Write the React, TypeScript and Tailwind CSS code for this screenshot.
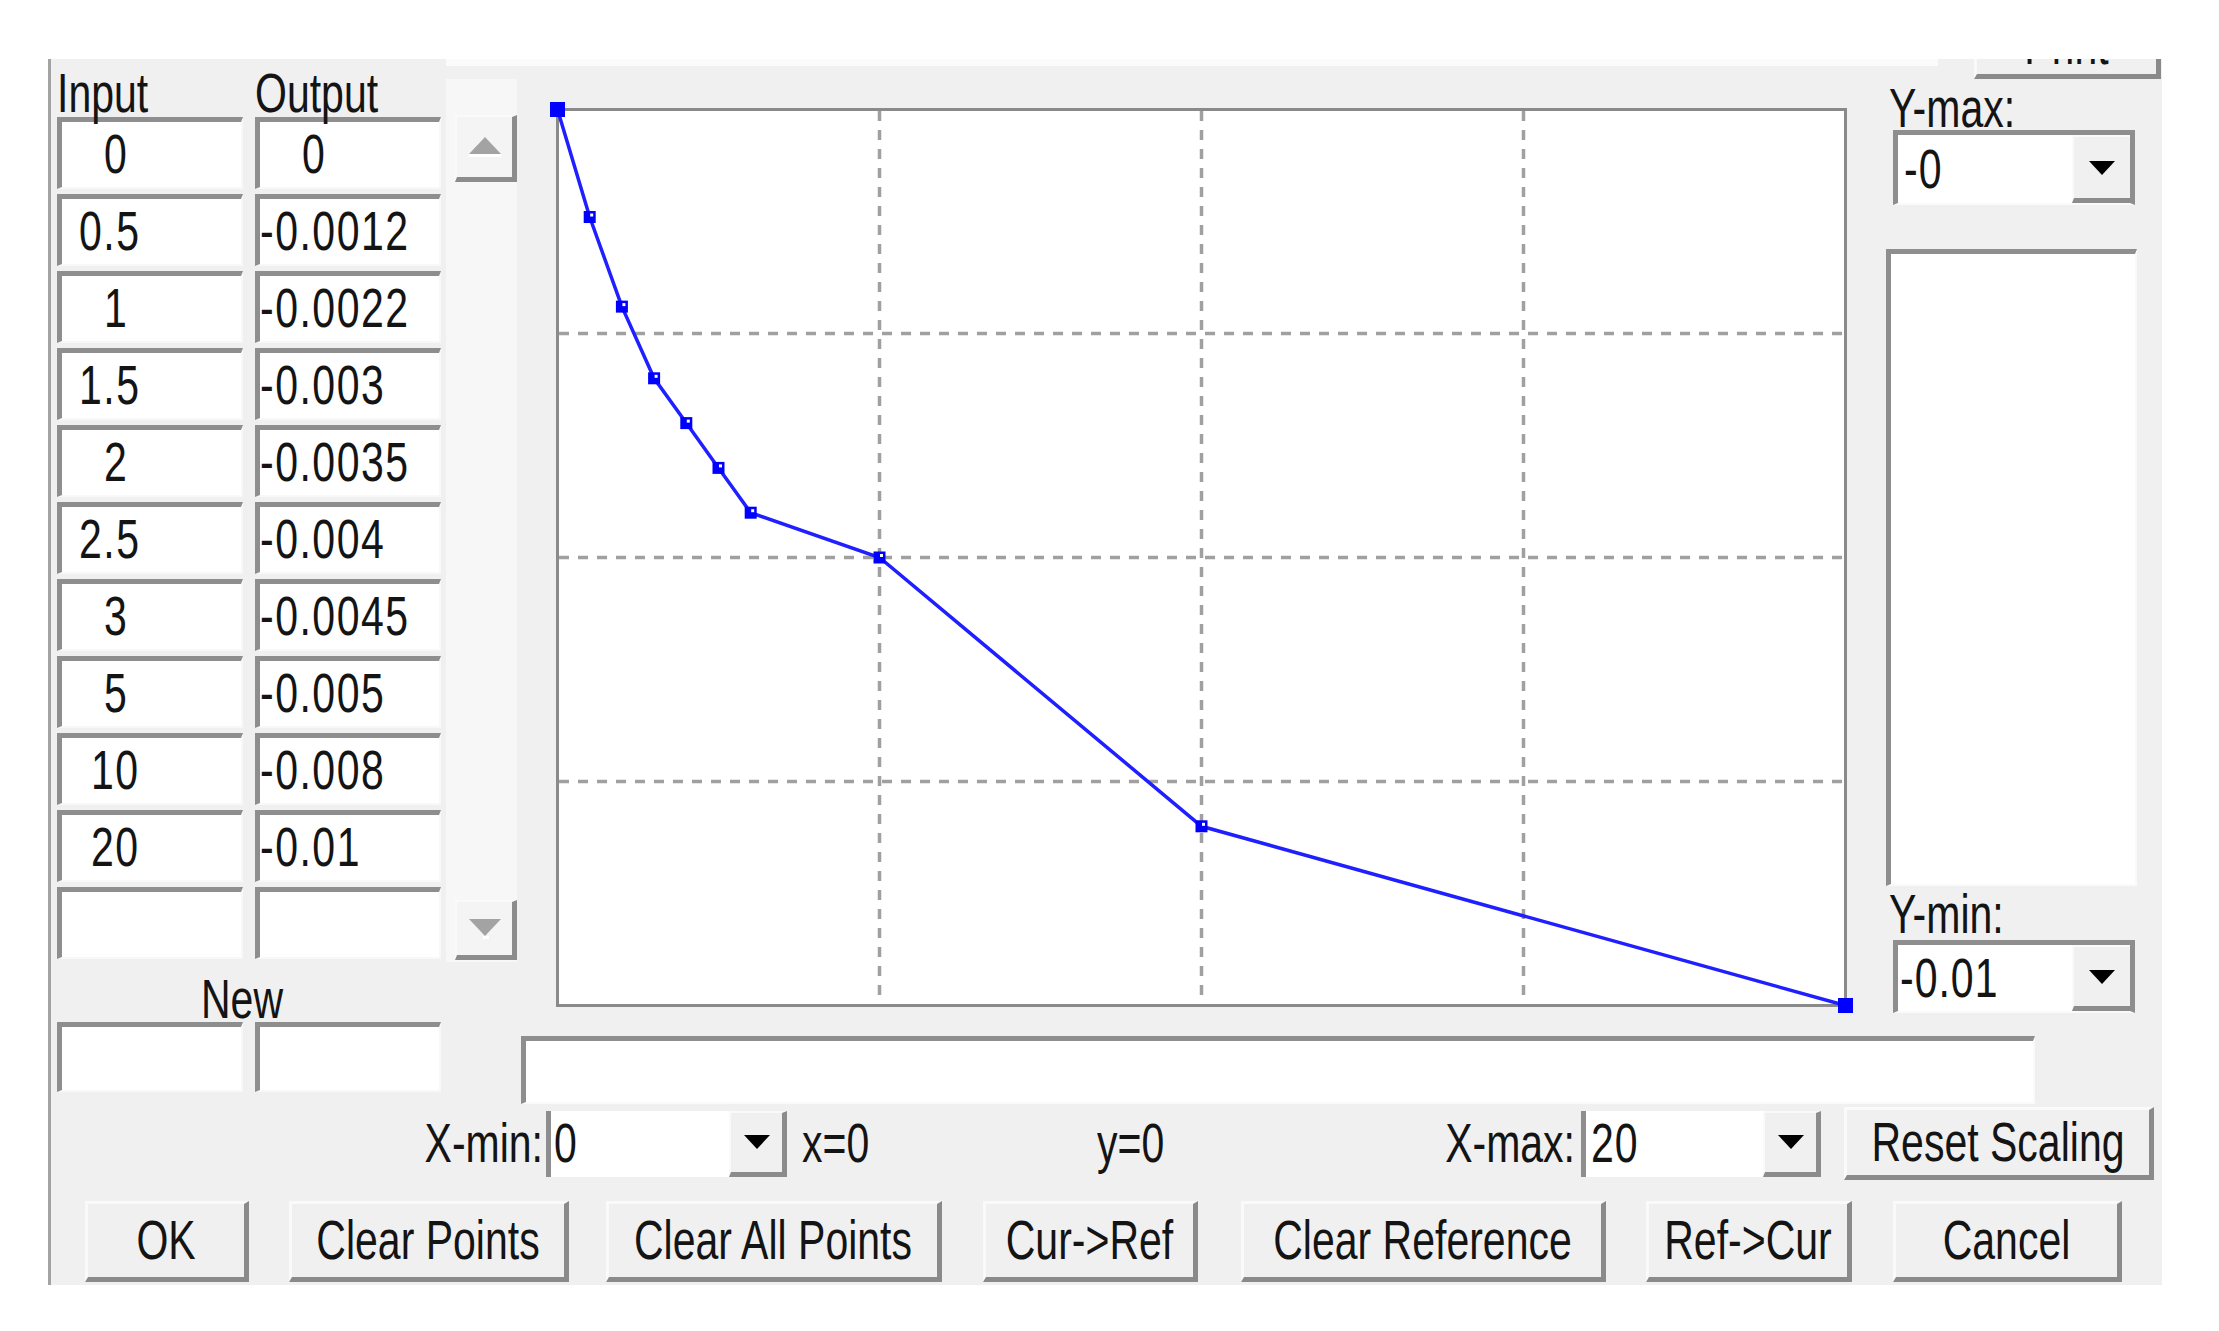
import type { ReactNode } from "react";

// text in the reference is a tall, narrow bitmap face; stretch Arial-metric text vertically
function T({ children, className = "" }: { children: ReactNode; className?: string }) {
  return (
    <span className={`inline-block h-[41px] origin-center scale-y-[1.37] leading-[41px] whitespace-pre ${className}`}>
      {children}
    </span>
  );
}

const rows: [string, string, string, string][] = [
  ["0", "0", "pl-[42px]", "pl-[42px]"],
  ["0.5", "-0.0012", "pl-[17px]", "pl-[0px]"],
  ["1", "-0.0022", "pl-[42px]", "pl-[0px]"],
  ["1.5", "-0.003", "pl-[17px]", "pl-[0px]"],
  ["2", "-0.0035", "pl-[42px]", "pl-[0px]"],
  ["2.5", "-0.004", "pl-[17px]", "pl-[0px]"],
  ["3", "-0.0045", "pl-[42px]", "pl-[0px]"],
  ["5", "-0.005", "pl-[42px]", "pl-[0px]"],
  ["10", "-0.008", "pl-[29px]", "pl-[0px]"],
  ["20", "-0.01", "pl-[29px]", "pl-[0px]"],
  ["", "", "pl-[0px]", "pl-[0px]"],
];

const points: [number, number][] = [
  [0, 0],
  [0.5, -0.0012],
  [1, -0.0022],
  [1.5, -0.003],
  [2, -0.0035],
  [2.5, -0.004],
  [3, -0.0045],
  [5, -0.005],
  [10, -0.008],
  [20, -0.01],
];

function Cell({ text, pad, h = "h-[72px]" }: { text: string; pad: string; h?: string }) {
  return (
    <div
      className={`flex ${h} w-[186px] items-center border-t-[5px] border-l-[5px] border-r-2 border-b-2 border-t-[#8e8e8e] border-l-[#8e8e8e] border-r-[#f8f8f8] border-b-[#f8f8f8] bg-white ${pad}`}
    >
      <T className="tracking-[1.5px]">{text}</T>
    </div>
  );
}

function Btn({ label, className }: { label: string; className: string }) {
  return (
    <div
      className={`flex items-center justify-center border-t-[3px] border-l-[3px] border-r-[5px] border-b-[5px] border-t-[#fafafa] border-l-[#fafafa] border-r-[#8a8a8a] border-b-[#8a8a8a] bg-[#f0f0f0] ${className}`}
    >
      <T>{label}</T>
    </div>
  );
}

function DropArrow() {
  return (
    <svg width="26" height="14" viewBox="0 0 26 14">
      <polygon points="0,0 26,0 13,14" fill="#000" />
    </svg>
  );
}

function Combo({ value, pad, flat, className }: { value: string; pad: string; flat?: boolean; className: string }) {
  const frame = flat
    ? "border-l-[5px] border-l-[#8e8e8e]"
    : "border-t-[5px] border-l-[5px] border-r-[5px] border-b-2 border-t-[#8e8e8e] border-l-[#8e8e8e] border-r-[#8e8e8e] border-b-[#fafafa]";
  return (
    <div className={`flex bg-white ${frame} ${className}`}>
      <div className={`flex flex-1 items-center ${pad}`}>
        <T className="tracking-[1px]">{value}</T>
      </div>
      <div
        className={`flex w-[58px] items-center justify-center border-t-2 border-l-2 border-b-[5px] border-t-[#fafafa] border-l-[#fafafa] border-b-[#8c8c8c] bg-[#f0f0f0] ${
          flat ? "border-r-[5px] border-r-[#8c8c8c]" : ""
        }`}
      >
        <DropArrow />
      </div>
    </div>
  );
}

function ScrollBtn({ up, className }: { up: boolean; className: string }) {
  return (
    <div
      className={`flex w-[62px] items-center justify-center border-t-2 border-l-2 border-r-[5px] border-b-[5px] border-t-[#fafafa] border-l-[#fafafa] border-r-[#8c8c8c] border-b-[#8c8c8c] bg-[#f4f4f4] ${className}`}
    >
      <svg width="32" height="20" viewBox="0 0 32 20">
        {up ? (
          <>
            <rect x="0" y="17" width="32" height="3" fill="#fff" />
            <polygon points="0,17 32,17 16,0" fill="#a3a3a3" />
          </>
        ) : (
          <>
            <polygon points="0,0 32,0 16,17" fill="#a3a3a3" />
            <rect x="14" y="17" width="6" height="3" fill="#fff" />
          </>
        )}
      </svg>
    </div>
  );
}

function Plot() {
  const W = 1285;
  const H = 893;
  const px = (x: number) => (x / 20) * 1288 - 1.5;
  const py = (y: number) => (-y / 0.01) * 896 - 1.5;
  const line = points.map(([x, y]) => `${px(x)},${py(y)}`).join(" ");
  return (
    <div className="ml-[39px] mt-[29px] h-[899px] w-[1291px] border-[3px] border-[#8a8a8a] bg-white">
      <svg width={W} height={H} viewBox={`0 0 ${W} ${H}`} className="overflow-visible">
        {[5, 10, 15].map((x) => (
          <line key={`v${x}`} x1={px(x)} y1={0} x2={px(x)} y2={H} stroke="#a0a0a0" strokeWidth="3.5" strokeDasharray="10 9" />
        ))}
        {[-0.0025, -0.005, -0.0075].map((y) => (
          <line key={`h${y}`} x1={0} y1={py(y)} x2={W} y2={py(y)} stroke="#a0a0a0" strokeWidth="3.5" strokeDasharray="10 9" />
        ))}
        <polyline points={line} fill="none" stroke="#1f1fff" strokeWidth="3.5" />
        {points.map(([x, y], i) => {
          const end = i === 0 || i === points.length - 1;
          const s = end ? 15 : 12;
          return (
            <g key={i}>
              <rect x={px(x) - s / 2} y={py(y) - s / 2} width={s} height={s} fill="#0000ff" />
              {!end && <rect x={px(x) + 0.5} y={py(y) - s / 2 + 2.5} width={3} height={3} fill="#ffffff" />}
            </g>
          );
        })}
      </svg>
    </div>
  );
}

export default function App() {
  return (
    <div className="h-[1331px] w-[2219px] overflow-hidden bg-white pl-[48px] pt-[59px] font-['Liberation_Sans',Arial,sans-serif] text-[41px] leading-[41px] text-[#141414]">
      <div className="flex h-[1226px] w-[2114px] flex-col border-l-[3px] border-l-[#a3a3a3] bg-[#f0f0f0]">
        {/* upper area */}
        <div className="flex items-start">
          {/* table */}
          <div className="flex w-[390px] flex-col pl-[6px]">
            <div className="mt-[14px] flex h-[41px] items-center">
              <div className="flex w-[198px]">
                <T>Input</T>
              </div>
              <T>Output</T>
            </div>
            <div className="mt-[3px] flex flex-col gap-[5px]">
              {rows.map(([a, b, pa, pb], i) => (
                <div key={i} className="flex gap-[12px]">
                  <Cell text={a} pad={pa} />
                  <Cell text={b} pad={pb} />
                </div>
              ))}
            </div>
            <div className="mt-[20px] flex h-[41px] items-center justify-center pr-[14px]">
              <T>New</T>
            </div>
            <div className="mt-[2px] flex gap-[12px]">
              <Cell text="" pad="pl-[0px]" h="h-[70px]" />
              <Cell text="" pad="pl-[0px]" h="h-[70px]" />
            </div>
          </div>

          {/* graph side */}
          <div className="flex w-[1721px] flex-col">
            <div className="flex h-[20px] items-start">
              <div className="ml-[5px] h-[7px] w-[1492px] bg-[#fbfbfb]" />
              <div className="ml-auto mr-[1px] flex h-[20px] w-[187px] items-end overflow-hidden">
                <Btn label="Print" className="h-[66px] w-[187px] shrink-0" />
              </div>
            </div>

            <div className="flex items-start">
              <div className="ml-[5px] flex h-[883px] w-[71px] flex-col bg-[#f7f7f7] pl-[9px]">
                <ScrollBtn up className="mt-[36px] h-[67px]" />
                <ScrollBtn up={false} className="mb-[2px] mt-auto h-[60px]" />
              </div>

              <Plot />

              <div className="ml-[39px] flex w-[251px] flex-col">
                <div className="mt-[9px] flex h-[41px] items-center pl-[3px]">
                  <T>Y-max:</T>
                </div>
                <Combo value="-0" pad="pl-[6px]" className="ml-[7px] mt-[1px] h-[75px] w-[242px]" />
                <div className="mt-[44px] h-[637px] w-[251px] border-t-[5px] border-l-[5px] border-r-2 border-b-2 border-t-[#8e8e8e] border-l-[#8e8e8e] border-r-[#fafafa] border-b-[#fafafa] bg-white" />
                <div className="mt-[8px] flex h-[41px] items-center pl-[3px]">
                  <T>Y-min:</T>
                </div>
                <Combo value="-0.01" pad="pl-[2px]" className="ml-[7px] mt-[5px] h-[73px] w-[242px]" />
              </div>
            </div>

            <div className="ml-[80px] mt-[23px] h-[68px] w-[1514px] border-t-[5px] border-l-[5px] border-r-2 border-b-2 border-t-[#8e8e8e] border-l-[#8e8e8e] border-r-[#fafafa] border-b-[#fafafa] bg-white" />
          </div>
        </div>

        {/* scaling row */}
        <div className="mt-[3px] flex h-[73px] items-center">
          <div className="flex w-[492px] justify-end">
            <T>X-min:</T>
          </div>
          <Combo value="0" pad="pl-[3px]" flat className="ml-[3px] h-[66px] w-[241px]" />
          <div className="flex w-[310px] pl-[15px]">
            <T>x=0</T>
          </div>
          <div className="flex w-[481px] justify-between pr-[3px]">
            <T>y=0</T>
            <T>X-max:</T>
          </div>
          <Combo value="20" pad="pl-[5px]" flat className="ml-[3px] h-[66px] w-[240px]" />
          <Btn label="Reset Scaling" className="ml-[23px] h-[73px] w-[310px]" />
        </div>

        {/* action buttons */}
        <div className="mt-[21px] flex h-[81px]">
          <Btn label="OK" className="ml-[34px] w-[164px]" />
          <Btn label="Clear Points" className="ml-[40px] w-[280px]" />
          <Btn label="Clear All Points" className="ml-[37px] w-[336px]" />
          <Btn label="Cur->Ref" className="ml-[41px] w-[215px]" />
          <Btn label="Clear Reference" className="ml-[43px] w-[365px]" />
          <Btn label="Ref->Cur" className="ml-[40px] w-[206px]" />
          <Btn label="Cancel" className="ml-[41px] w-[229px]" />
        </div>
      </div>
    </div>
  );
}
